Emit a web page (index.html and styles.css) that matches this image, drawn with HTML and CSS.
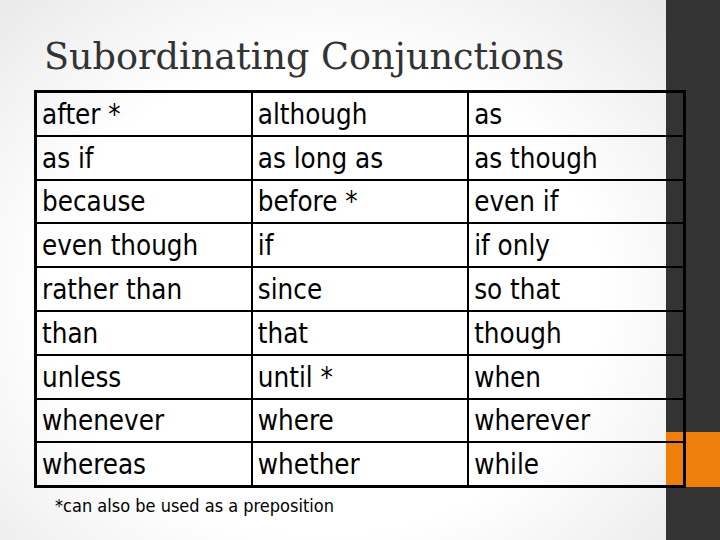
FILE: index.html
```html
<!DOCTYPE html>
<html>
<head>
<meta charset="utf-8">
<link rel="stylesheet" href="styles.css">
</head>
<body>
<div class="slide">
  <h1 class="title">Subordinating Conjunctions</h1>
  <table class="conj">
    <tr><td>after *</td><td>although</td><td>as</td></tr>
    <tr><td>as if</td><td>as long as</td><td>as though</td></tr>
    <tr><td>because</td><td>before *</td><td>even if</td></tr>
    <tr><td>even though</td><td>if</td><td>if only</td></tr>
    <tr><td>rather than</td><td>since</td><td>so that</td></tr>
    <tr><td>than</td><td>that</td><td>though</td></tr>
    <tr><td>unless</td><td>until *</td><td>when</td></tr>
    <tr><td>whenever</td><td>where</td><td>wherever</td></tr>
    <tr><td>whereas</td><td>whether</td><td>while</td></tr>
  </table>
  <p class="note">*can also be used as a preposition</p>
</div>
</body>
</html>
```
FILE: styles.css
```css
html, body {
  margin: 0;
  padding: 0;
}
.slide {
  width: 720px;
  height: 540px;
  box-sizing: border-box;
  padding: 35px 0 0 34px;
  overflow: hidden;
  background:
    linear-gradient(#ee7f0b, #ee7f0b) right 0 top 432px / 54px 55px no-repeat,
    linear-gradient(#333333, #333333) right 0 top 0 / 54px 100% no-repeat,
    radial-gradient(ellipse 70% 80% at 45% 55%, #ffffff 55%, #e6e6e6 100%);
}
.title {
  margin: 0 0 0 10px;
  height: 55px;
  font-family: "DejaVu Serif", serif;
  font-weight: normal;
  font-size: 36.6px;
  line-height: 44px;
  color: #333333;
  white-space: nowrap;
}
.conj {
  border-collapse: collapse;
  border: 3px solid #000;
  width: 652px;
  font-family: "DejaVu Sans Condensed", "DejaVu Sans", sans-serif;
  font-size: 27.5px;
  color: #000;
}
.conj td {
  border: 2px solid #000;
  height: 41.8px;
  padding: 0 5px;
  width: 33.3%;
  line-height: 32px;
  vertical-align: middle;
}
.note {
  margin: 7px 0 0 21px;
  font-family: "DejaVu Sans Condensed", "DejaVu Sans", sans-serif;
  font-size: 18px;
  line-height: 22px;
  color: #000;
}
```
